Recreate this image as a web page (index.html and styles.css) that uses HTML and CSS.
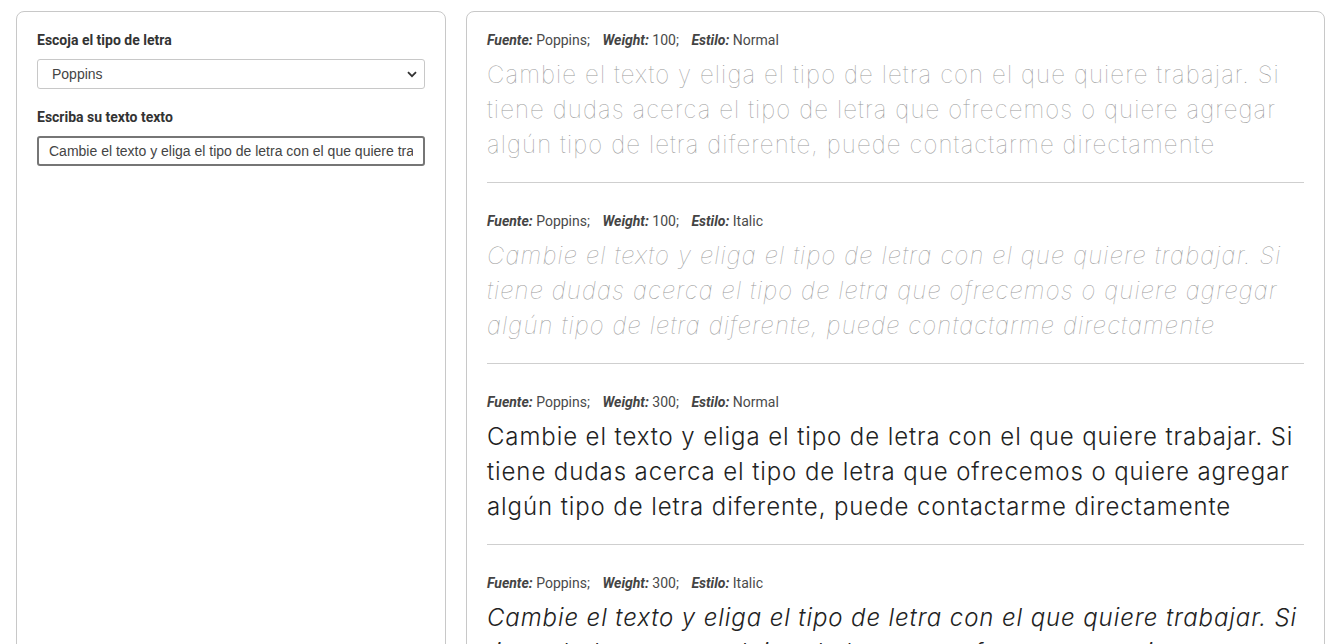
FILE: index.html
```html
<!DOCTYPE html>
<html lang="es">
<head>
<meta charset="utf-8">
<title>Tipos de letra</title>
<link rel="stylesheet" href="styles.css">
</head>
<body>
<div class="layout">
  <aside class="card side">
    <label class="label" for="font">Escoja el tipo de letra</label>
    <div class="select-wrap">
      <select id="font" class="select"><option>Poppins</option></select>
      <svg class="chev" width="10" height="7" viewBox="0 0 10 7"><path d="M1 1.2 L5 5.2 L9 1.2" fill="none" stroke="#333" stroke-width="1.8"/></svg>
    </div>
    <label class="label label2" for="txt">Escriba su texto texto</label>
    <input id="txt" class="input" type="text" value="Cambie el texto y eliga el tipo de letra con el que quiere trabajar. Si tiene dudas acerca el tipo de letra que ofrecemos o quiere agregar algún tipo de letra diferente, puede contactarme directamente">
  </aside>
  <main class="card preview">
    <section class="sample">
      <p class="meta"><b>Fuente:</b> Poppins; <b>Weight:</b> 100; <b>Estilo:</b> Normal</p>
      <p class="text w100">Cambie el texto y eliga el tipo de letra con el que quiere trabajar. Si tiene dudas acerca el tipo de letra que ofrecemos o quiere agregar algún tipo de letra diferente, puede contactarme directamente</p>
    </section>
    <section class="sample">
      <p class="meta"><b>Fuente:</b> Poppins; <b>Weight:</b> 100; <b>Estilo:</b> Italic</p>
      <p class="text w100 it">Cambie el texto y eliga el tipo de letra con el que quiere trabajar. Si tiene dudas acerca el tipo de letra que ofrecemos o quiere agregar algún tipo de letra diferente, puede contactarme directamente</p>
    </section>
    <section class="sample">
      <p class="meta"><b>Fuente:</b> Poppins; <b>Weight:</b> 300; <b>Estilo:</b> Normal</p>
      <p class="text w300">Cambie el texto y eliga el tipo de letra con el que quiere trabajar. Si tiene dudas acerca el tipo de letra que ofrecemos o quiere agregar algún tipo de letra diferente, puede contactarme directamente</p>
    </section>
    <section class="sample">
      <p class="meta"><b>Fuente:</b> Poppins; <b>Weight:</b> 300; <b>Estilo:</b> Italic</p>
      <p class="text w300 it">Cambie el texto y eliga el tipo de letra con el que quiere trabajar. Si tiene dudas acerca el tipo de letra que ofrecemos o quiere agregar algún tipo de letra diferente, puede contactarme directamente</p>
    </section>
  </main>
</div>
</body>
</html>
```
FILE: styles.css
```css
* { box-sizing: border-box; }
html, body { margin: 0; background: #fff; }
body {
  font-family: Roboto, "Liberation Sans", sans-serif;
  color: #333;
  padding: 11px 12px 0 16px;
}
.layout {
  display: grid;
  grid-template-columns: 430px 1fr;
  gap: 20px;
  align-items: start;
}
.card {
  border: 1px solid #c8c8c8;
  border-radius: 8px;
  background: #fff;
  padding: 20px;
}
.side { min-height: 700px; }
.label {
  display: block;
  font-size: 14px;
  font-weight: 700;
  color: #333;
  line-height: 17px;
  margin-bottom: 10px;
}
.label2 { margin-top: 20px; }
.select-wrap { position: relative; }
.select {
  appearance: none;
  -webkit-appearance: none;
  width: 100%;
  height: 30px;
  border: 1px solid #c8c8c8;
  border-radius: 3px;
  background: #fff;
  font-family: "Liberation Sans", Arial, sans-serif;
  font-size: 14px;
  color: #444;
  padding: 0 14px;
}
.chev { position: absolute; right: 8px; top: 12px; }
.input {
  display: block;
  width: 100%;
  height: 30px;
  border: 2px solid #767676;
  border-radius: 3px;
  font-family: "Liberation Sans", Arial, sans-serif;
  font-size: 14px;
  color: #444;
  padding: 0 10px;
  outline: none;
}
.sample {
  border-bottom: 1px solid #cfcfcf;
  padding-bottom: 20px;
  margin-bottom: 30px;
}
.meta {
  margin: 0 0 8px;
  font-size: 14px;
  line-height: 17px;
  color: #4a4a4a;
}
.meta b { font-style: italic; font-weight: 700; color: #444; margin-left: 9px; }
.meta b:first-child { margin-left: 0; }
.text {
  margin: 0;
  font-family: Inter, "Noto Sans", sans-serif;
  font-size: 24px;
  line-height: 35px;
}
.w100 { font-weight: 100; color: #999; letter-spacing: 1.1px; }
.w300 { font-weight: 300; color: #222; letter-spacing: 0.9px; }
.it { font-style: italic; }
```
